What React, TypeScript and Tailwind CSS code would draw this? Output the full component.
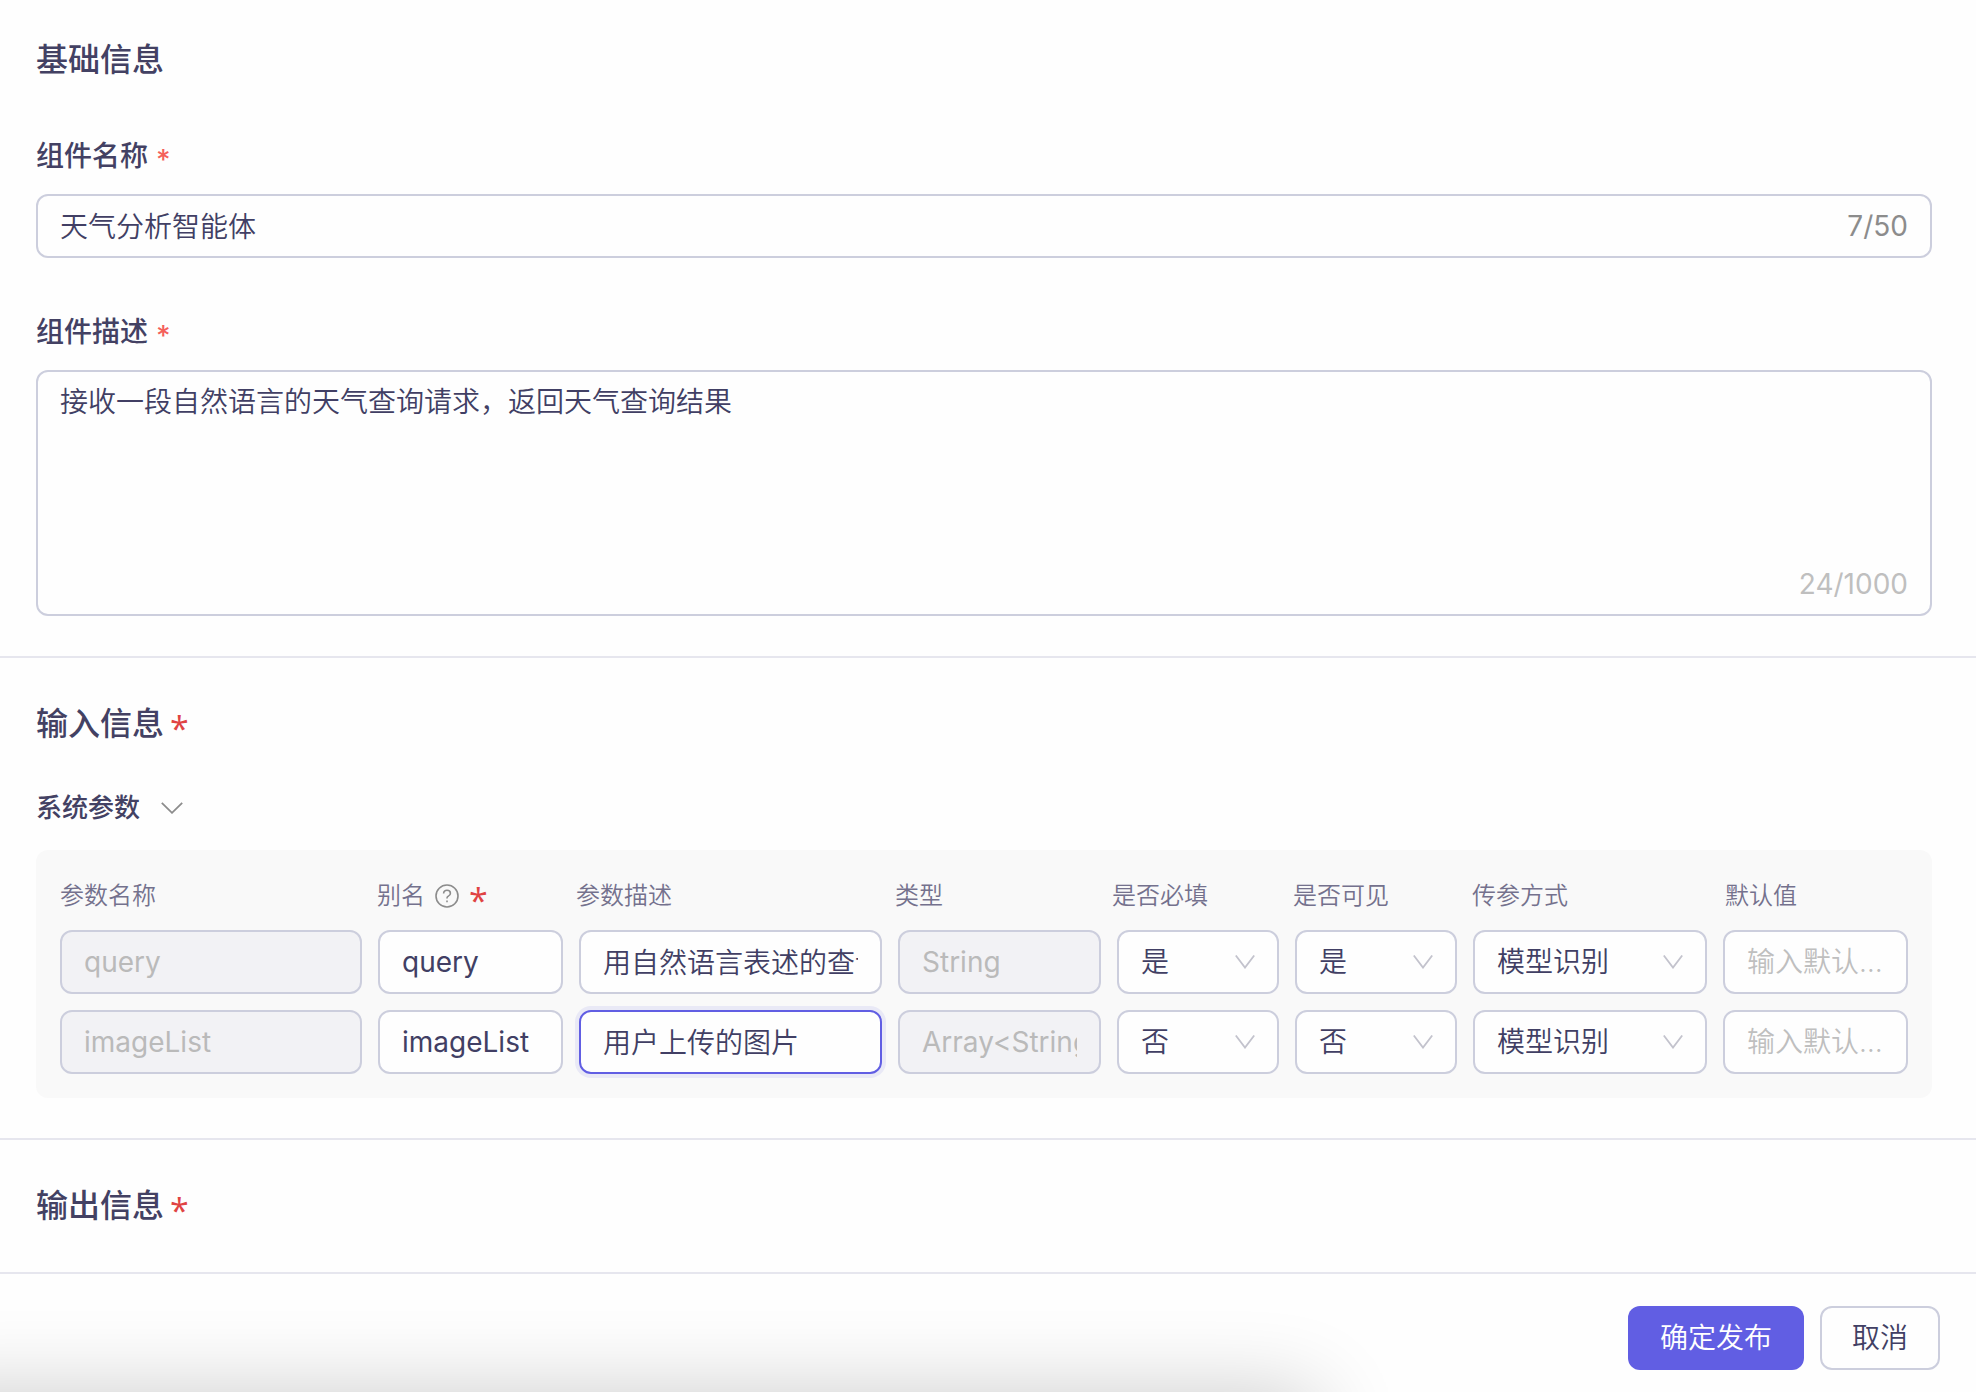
import { useState } from 'react';
import type { ReactNode } from 'react';
import clsx from 'clsx';

interface Param {
    name: string;
    alias: string;
    desc: string;
    type: string;
    required: string;
    visible: string;
    mode: string;
    defaultValue: string;
}

const NAME_LIMIT = 50;
const DESC_LIMIT = 1000;

const initialParams: Param[] = [
    {
        name: 'query',
        alias: 'query',
        desc: '用自然语言表述的查询请求',
        type: 'String',
        required: '是',
        visible: '是',
        mode: '模型识别',
        defaultValue: '',
    },
    {
        name: 'imageList',
        alias: 'imageList',
        desc: '用户上传的图片',
        type: 'Array<String>',
        required: '否',
        visible: '否',
        mode: '模型识别',
        defaultValue: '',
    },
];

const boxClass = 'w-full rounded-xl border-2 border-[#cccedd] bg-[#fefefe] px-[22px] text-[28px] text-[#413f64] outline-none';
const focusClass = 'focus:border-[#615ee3] focus:ring-4 focus:ring-[#615ee3]/10';
const disabledClass = 'disabled:bg-[#f2f2f5] disabled:text-[#bababa]';
const headGrid = 'grid grid-cols-[317fr_199fr_319fr_217fr_181fr_179fr_253fr_183fr]';
const rowGrid = 'grid gap-4 grid-cols-[302fr_185fr_303fr_203fr_162fr_162fr_234fr_185fr]';

function SectionTitle({ children, required }: { children: ReactNode; required?: boolean }) {
    return (
        <h2 className="flex items-center gap-1.5 text-[32px] leading-[48px] font-medium text-[#434163]">
            {children}
            {required && <Star />}
        </h2>
    );
}

function Star() {
    return <span className="pt-2 font-['Open_Sans'] text-[34px] leading-[28px] font-normal text-[#e04343]">*</span>;
}

function FieldLabel({ htmlFor, children }: { htmlFor: string; children: ReactNode }) {
    return (
        <label htmlFor={htmlFor} className="flex items-center gap-2 text-[28px] leading-[44px] font-medium text-[#434163]">
            {children}
            <span className="pt-2 font-['Inter'] text-[28px] leading-[28px] text-[#f4605a]">*</span>
        </label>
    );
}

function HelpIcon() {
    return (
        <svg className="size-6" viewBox="0 0 24 24" fill="none" stroke="#8c8c8c" strokeWidth="1.6" aria-hidden="true">
            <circle cx="12" cy="12" r="11" />
            <path d="M8.6 9.4c0-1.9 1.4-3.1 3.4-3.1s3.4 1.2 3.4 2.9c0 1.4-.8 2.2-1.8 2.7-1.1.5-1.6 1.1-1.6 2v.7" />
            <path d="M12 16.4v1.8" />
        </svg>
    );
}

interface SelectProps {
    label: string;
    value: string;
    options: string[];
    onChange: (value: string) => void;
}

function Select({ label, value, options, onChange }: SelectProps) {
    return (
        <div className="relative">
            <select
                aria-label={label}
                value={value}
                onChange={(e) => onChange(e.target.value)}
                className={clsx(boxClass, focusClass, 'h-16 appearance-none font-[350]')}
            >
                {options.map((o) => (
                    <option key={o}>{o}</option>
                ))}
            </select>
            <svg
                className="pointer-events-none absolute top-[25px] right-6 h-[14px] w-5"
                viewBox="0 0 20 14"
                fill="none"
                stroke="#c3c3cd"
                strokeWidth="1.8"
                aria-hidden="true"
            >
                <path d="M.8.5 10 12.6 19.2.5" />
            </svg>
        </div>
    );
}

export default function App() {
    const [name, setName] = useState('天气分析智能体');
    const [desc, setDesc] = useState('接收一段自然语言的天气查询请求，返回天气查询结果');
    const [open, setOpen] = useState(true);
    const [params, setParams] = useState(initialParams);

    const update = (index: number, patch: Partial<Param>) => {
        setParams((list) => list.map((p, i) => (i === index ? { ...p, ...patch } : p)));
    };

    return (
        <div className="flex min-h-screen flex-col bg-[#fefefe] font-['Inter','Noto_Sans_CJK_SC',sans-serif] text-[#413f64]">
            {/* Basic info */}
            <section className="border-b-2 border-[#e6e6ee] pt-9 pr-11 pb-10 pl-9">
                <SectionTitle>基础信息</SectionTitle>

                <div className="mt-[50px]">
                    <FieldLabel htmlFor="name">组件名称</FieldLabel>
                    <div className="relative mt-4">
                        <input
                            id="name"
                            value={name}
                            maxLength={NAME_LIMIT}
                            onChange={(e) => setName(e.target.value)}
                            className={clsx(boxClass, focusClass, 'h-16 pr-32 pb-0.5 font-[350]')}
                        />
                        <span className="absolute top-2.5 right-6 text-[28px] leading-[44px] text-[#8c8c8c]">
                            {name.length}/{NAME_LIMIT}
                        </span>
                    </div>
                </div>

                <div className="mt-[52px]">
                    <FieldLabel htmlFor="desc">组件描述</FieldLabel>
                    <div className="relative mt-4">
                        <textarea
                            id="desc"
                            value={desc}
                            maxLength={DESC_LIMIT}
                            onChange={(e) => setDesc(e.target.value)}
                            className={clsx(boxClass, focusClass, 'block h-[246px] resize-none py-2 leading-[44px] font-[350]')}
                        />
                        <span className="absolute right-6 bottom-2.5 text-[28px] leading-[44px] text-[#bfbfbf]">
                            {desc.length}/{DESC_LIMIT}
                        </span>
                    </div>
                </div>
            </section>

            {/* Input info */}
            <section className="border-b-2 border-[#e6e6ee] pt-[42px] pr-11 pb-10 pl-9">
                <SectionTitle required>输入信息</SectionTitle>

                <button
                    type="button"
                    aria-expanded={open}
                    onClick={() => setOpen(!open)}
                    className="mt-10 flex items-center gap-5 text-[26px] leading-[40px] font-medium text-[#434163]"
                >
                    系统参数
                    <svg className="h-3 w-6" viewBox="0 0 24 12" fill="none" stroke="#8c8c8c" strokeWidth="1.8" aria-hidden="true">
                        <path d="M1.8.8 12 10.8 22.2.8" />
                    </svg>
                </button>

                {open && (
                    <table className="mt-[22px] block rounded-xl bg-[#f9f9f9] px-6 pt-[26px] pb-6">
                        <thead className="block">
                            <tr
                                className={clsx(
                                    headGrid,
                                    'text-left text-[24px] leading-[40px] text-[#74718d] *:p-0 *:font-[350]',
                                )}
                            >
                                <th>参数名称</th>
                                <th className="flex h-10 items-center gap-2.5">
                                    别名
                                    <HelpIcon />
                                    <Star />
                                </th>
                                <th>参数描述</th>
                                <th>类型</th>
                                <th>是否必填</th>
                                <th>是否可见</th>
                                <th>传参方式</th>
                                <th>默认值</th>
                            </tr>
                        </thead>
                        <tbody className="mt-3.5 flex flex-col gap-4">
                            {params.map((p, i) => (
                                <tr key={p.name} className={clsx(rowGrid, '*:min-w-0 *:p-0')}>
                                    <td>
                                        <input
                                            aria-label="参数名称"
                                            disabled
                                            value={p.name}
                                            className={clsx(boxClass, disabledClass, 'h-16')}
                                        />
                                    </td>
                                    <td>
                                        <input
                                            aria-label="别名"
                                            value={p.alias}
                                            onChange={(e) => update(i, { alias: e.target.value })}
                                            className={clsx(boxClass, focusClass, 'h-16')}
                                        />
                                    </td>
                                    <td>
                                        <input
                                            aria-label="参数描述"
                                            value={p.desc}
                                            onChange={(e) => update(i, { desc: e.target.value })}
                                            className={clsx(
                                                boxClass,
                                                'h-16 pb-0.5 font-[350]',
                                                i === 1 ? 'border-[#615ee3]! ring-4 ring-[#615ee3]/10' : focusClass,
                                            )}
                                        />
                                    </td>
                                    <td>
                                        <input
                                            aria-label="类型"
                                            disabled
                                            value={p.type}
                                            className={clsx(boxClass, disabledClass, 'h-16')}
                                        />
                                    </td>
                                    <td>
                                        <Select
                                            label="是否必填"
                                            value={p.required}
                                            options={['是', '否']}
                                            onChange={(v) => update(i, { required: v })}
                                        />
                                    </td>
                                    <td>
                                        <Select
                                            label="是否可见"
                                            value={p.visible}
                                            options={['是', '否']}
                                            onChange={(v) => update(i, { visible: v })}
                                        />
                                    </td>
                                    <td>
                                        <Select
                                            label="传参方式"
                                            value={p.mode}
                                            options={['模型识别']}
                                            onChange={(v) => update(i, { mode: v })}
                                        />
                                    </td>
                                    <td>
                                        <input
                                            aria-label="默认值"
                                            value={p.defaultValue}
                                            placeholder="输入默认值"
                                            onChange={(e) => update(i, { defaultValue: e.target.value })}
                                            className={clsx(
                                                boxClass,
                                                focusClass,
                                                'h-16 font-[350] text-ellipsis placeholder:text-[#bfbfbf]',
                                            )}
                                        />
                                    </td>
                                </tr>
                            ))}
                        </tbody>
                    </table>
                )}
            </section>

            {/* Output info */}
            <section className="border-b-2 border-[#e6e6ee] pt-[42px] pr-11 pb-[42px] pl-9">
                <SectionTitle required>输出信息</SectionTitle>
            </section>

            <footer className="relative flex grow items-start justify-end gap-4 overflow-hidden pt-8 pr-9 pb-[22px]">
                {/* soft shadow rising from below the bar */}
                <div className="pointer-events-none absolute top-full right-1/3 -left-24 h-24 shadow-[0_0_84px_rgba(0,0,0,0.2)]" />
                <button type="button" className="h-16 rounded-xl bg-[#615ee3] px-8 text-[28px] font-[350] text-white">
                    确定发布
                </button>
                <button
                    type="button"
                    className="h-16 rounded-xl border-2 border-[#cccedd] bg-[#fefefe] px-[30px] text-[28px] font-[350]"
                >
                    取消
                </button>
            </footer>
        </div>
    );
}
